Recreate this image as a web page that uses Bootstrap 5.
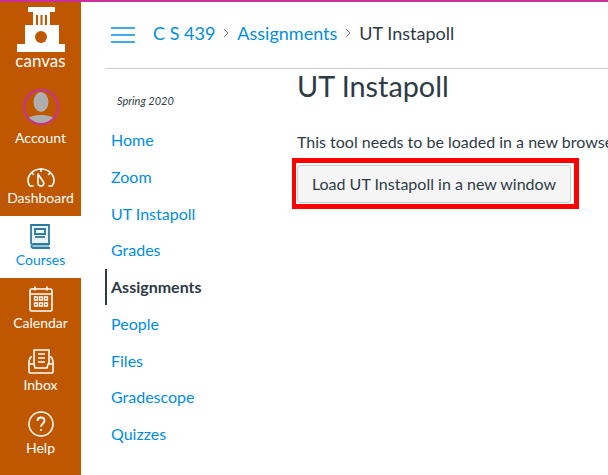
<!DOCTYPE html>
<html lang="en">
<head>
  <meta charset="UTF-8">
  <title>UT Instapoll</title>
  <link href="https://cdn.jsdelivr.net/npm/bootstrap@5.3.0/dist/css/bootstrap.min.css" rel="stylesheet">
  <style>
    html, body { height: 475px; overflow: hidden; }
    body { font-family: Lato, "Liberation Sans", sans-serif; color: #2d3b45; border-top: 2px solid #c9309c; }
    a { text-decoration: none; color: #008ee2; }
    .global-nav { width: 81px; background: #bf5700; height: 473px; flex: none; }
    .logo-link { height: 91.5px; font-size: 17px; line-height: 17px; padding-top: 5px; }
    .global-item { height: 62.5px; color: #fff; font-size: 14px; line-height: 16px; padding-bottom: 10px; }
    .global-item.is-short { height: 59.8px; }
    .global-item.is-active { background: #fff; color: #008ee2; }
    .global-item svg { display: block; margin-bottom: 3px; flex: none; }
    .avatar-ring { width: 36px; height: 36px; flex: none; border-radius: 50%; border: 2px solid #c9309c; overflow: hidden; margin-bottom: 5px; }
    .avatar-ring svg { margin: 0; }
    .top-bar { height: 67px; margin-left: 24px; border-bottom: 1px solid #c7cdd1; padding-left: 6px; }
    .crumbs { font-size: 18px; margin-left: 18px; margin-bottom: 4px; }
    .crumb-sep { margin: 0 8px; }
    .course-nav { width: 216px; flex: none; padding-left: 24px; }
    .term-label { font-size: 11px; font-style: italic; padding: 25px 0 0 12px; height: 52.66px; line-height: 14px; }
    .course-link { height: 36.78px; font-size: 16px; padding-left: 4px; border-left: 2px solid transparent; }
    .course-link.is-active { color: #2d3b45; font-weight: 700; border-left-color: #2d3b45; }
    .tool-title { font-size: 28.8px; font-weight: 400; line-height: 36px; margin: -1px 0 0; white-space: nowrap; }
    .tool-text { font-size: 16px; line-height: 20px; margin: 28px 0 6px; white-space: nowrap; }
    .red-box { display: inline-block; border: 5px solid #f00; border-left-width: 4px; margin-left: -5px; padding: 2px 3px 1px 1px; line-height: 0; }
    .load-btn { font-size: 16px; color: #2d3b45; background: #f5f5f5; border: 1px solid #c7cdd1; border-radius: 3px; width: 274px; height: 38px; padding: 0; }
  </style>
</head>
<body class="d-flex">

  <nav class="global-nav d-flex flex-column align-items-stretch">
    <a href="#" class="logo-link d-flex flex-column align-items-center text-white">
      <svg width="48" height="45" viewBox="0 0 48 45" fill="#fff">
        <path fill-rule="evenodd" d="M11 0h27v5h-5v13h9v19h6v8H0v-8h8V18h8V5h-5zM19 8v10h2V8zM23.500 8v10h2V8zM28 8v10h2V8z"/>
        <circle cx="24" cy="30" r="6" fill="#bf5700"/>
      </svg>
      <span>canvas</span>
    </a>
    <a href="#" class="global-item d-flex flex-column align-items-center justify-content-end">
      <span class="avatar-ring">
        <svg width="32" height="32" viewBox="0 0 32 32"><ellipse cx="16" cy="11" rx="7.500" ry="10" fill="#aeaeae"/><path d="M1 32c0-6 7-8 15-8s15 2 15 8z" fill="#aeaeae"/></svg>
      </span>
      <span>Account</span>
    </a>
    <a href="#" class="global-item is-short d-flex flex-column align-items-center justify-content-end">
      <svg width="28" height="19" viewBox="0 0 28 19" fill="none" stroke="#fff" stroke-width="1.600" stroke-linecap="round">
        <path d="M6 18H3C1.500 16 1 14 1 12.500a13 11.500 0 0 1 26 0c0 1.500-.5 3.500-2 5.500h-3"/>
        <path d="M14 1v2.500M5 5l1.500 1.500M23 5l-1.500 1.500"/>
        <path d="M11 6l5.500 8c1 2-.5 4-2.500 4s-3-1.500-3-3.500z" stroke-linejoin="round"/>
      </svg>
      <span>Dashboard</span>
    </a>
    <a href="#" class="global-item is-active d-flex flex-column align-items-center justify-content-end">
      <svg width="21" height="25" viewBox="0 0 21 25" fill="none" stroke="#2a7ba0" stroke-width="1.800">
        <path d="M1 20V1h18v19H3.500a2 2 0 0 0 0 4H20" fill="#eaf3f7"/>
        <path d="M5 5h10v5H5z" fill="#fff"/>
        <path d="M5 13h10"/>
        <path d="M3 22h16" stroke="#7fb3cb" stroke-width="1.600"/>
      </svg>
      <span>Courses</span>
    </a>
    <a href="#" class="global-item d-flex flex-column align-items-center justify-content-end">
      <svg width="24" height="26" viewBox="0 0 24 26" fill="none" stroke="#fff" stroke-width="1.600">
        <rect x="1" y="3" width="22" height="22" rx="1.500"/>
        <path d="M1 8h22M6 .5v4M18 .5v4"/>
        <path d="M5.500 11h3v3h-3zM10.500 11h3v3h-3zM15.500 11h3v3h-3zM5.500 17h3v3h-3zM10.500 17h3v3h-3zM15.500 17h3v3h-3z" stroke-width="1.300"/>
      </svg>
      <span>Calendar</span>
    </a>
    <a href="#" class="global-item d-flex flex-column align-items-center justify-content-end">
      <svg width="26" height="25" viewBox="0 0 26 25" fill="none" stroke="#fff" stroke-width="1.600" stroke-linejoin="round">
        <path d="M6 15V1h15v14"/>
        <path d="M10 5h7M10 9h7M10 13h7"/>
        <path d="M4 8H2.500L1 12v11a1 1 0 0 0 1 1h22a1 1 0 0 0 1-1V12l-1.500-4H22"/>
        <path d="M1 15h5l1 4h12l1-4h5"/>
      </svg>
      <span>Inbox</span>
    </a>
    <a href="#" class="global-item d-flex flex-column align-items-center justify-content-end">
      <svg width="26" height="26" viewBox="0 0 26 26" fill="none" stroke="#fff" stroke-width="1.500">
        <circle cx="13" cy="13" r="12"/>
        <path d="M9.500 10c0-2 1.500-3.500 3.500-3.500s3.500 1.500 3.500 3.300c0 3-3.500 3-3.500 6" stroke-width="1.800"/>
        <circle cx="13" cy="19" r="1.100" fill="#fff" stroke="none"/>
      </svg>
      <span>Help</span>
    </a>
  </nav>

  <div class="flex-grow-1 overflow-hidden">
    <header class="top-bar d-flex align-items-center">
      <svg width="24" height="16" viewBox="0 0 24 16" stroke="#008ee2" stroke-width="1.500"><path d="M0 1h24M0 8h24M0 15h24"/></svg>
      <div class="crumbs d-flex align-items-center text-nowrap">
        <a href="#">C S 439</a>
        <svg class="crumb-sep" width="6" height="10" viewBox="0 0 6 10" fill="none" stroke="#73818c" stroke-width="1"><path d="M1 1l4 4-4 4"/></svg>
        <a href="#">Assignments</a>
        <svg class="crumb-sep" width="6" height="10" viewBox="0 0 6 10" fill="none" stroke="#73818c" stroke-width="1"><path d="M1 1l4 4-4 4"/></svg>
        <span>UT Instapoll</span>
      </div>
    </header>

    <div class="d-flex">
      <aside class="course-nav">
        <div class="term-label">Spring 2020</div>
        <a href="#" class="course-link d-flex align-items-center">Home</a>
        <a href="#" class="course-link d-flex align-items-center">Zoom</a>
        <a href="#" class="course-link d-flex align-items-center">UT Instapoll</a>
        <a href="#" class="course-link d-flex align-items-center">Grades</a>
        <a href="#" class="course-link is-active d-flex align-items-center">Assignments</a>
        <a href="#" class="course-link d-flex align-items-center">People</a>
        <a href="#" class="course-link d-flex align-items-center">Files</a>
        <a href="#" class="course-link d-flex align-items-center">Gradescope</a>
        <a href="#" class="course-link d-flex align-items-center">Quizzes</a>
      </aside>
      <main>
        <h1 class="tool-title">UT Instapoll</h1>
        <p class="tool-text">This tool needs to be loaded in a new browser window</p>
        <span class="red-box"><button type="button" class="load-btn">Load UT Instapoll in a new window</button></span>
      </main>
    </div>
  </div>

</body>
</html>
